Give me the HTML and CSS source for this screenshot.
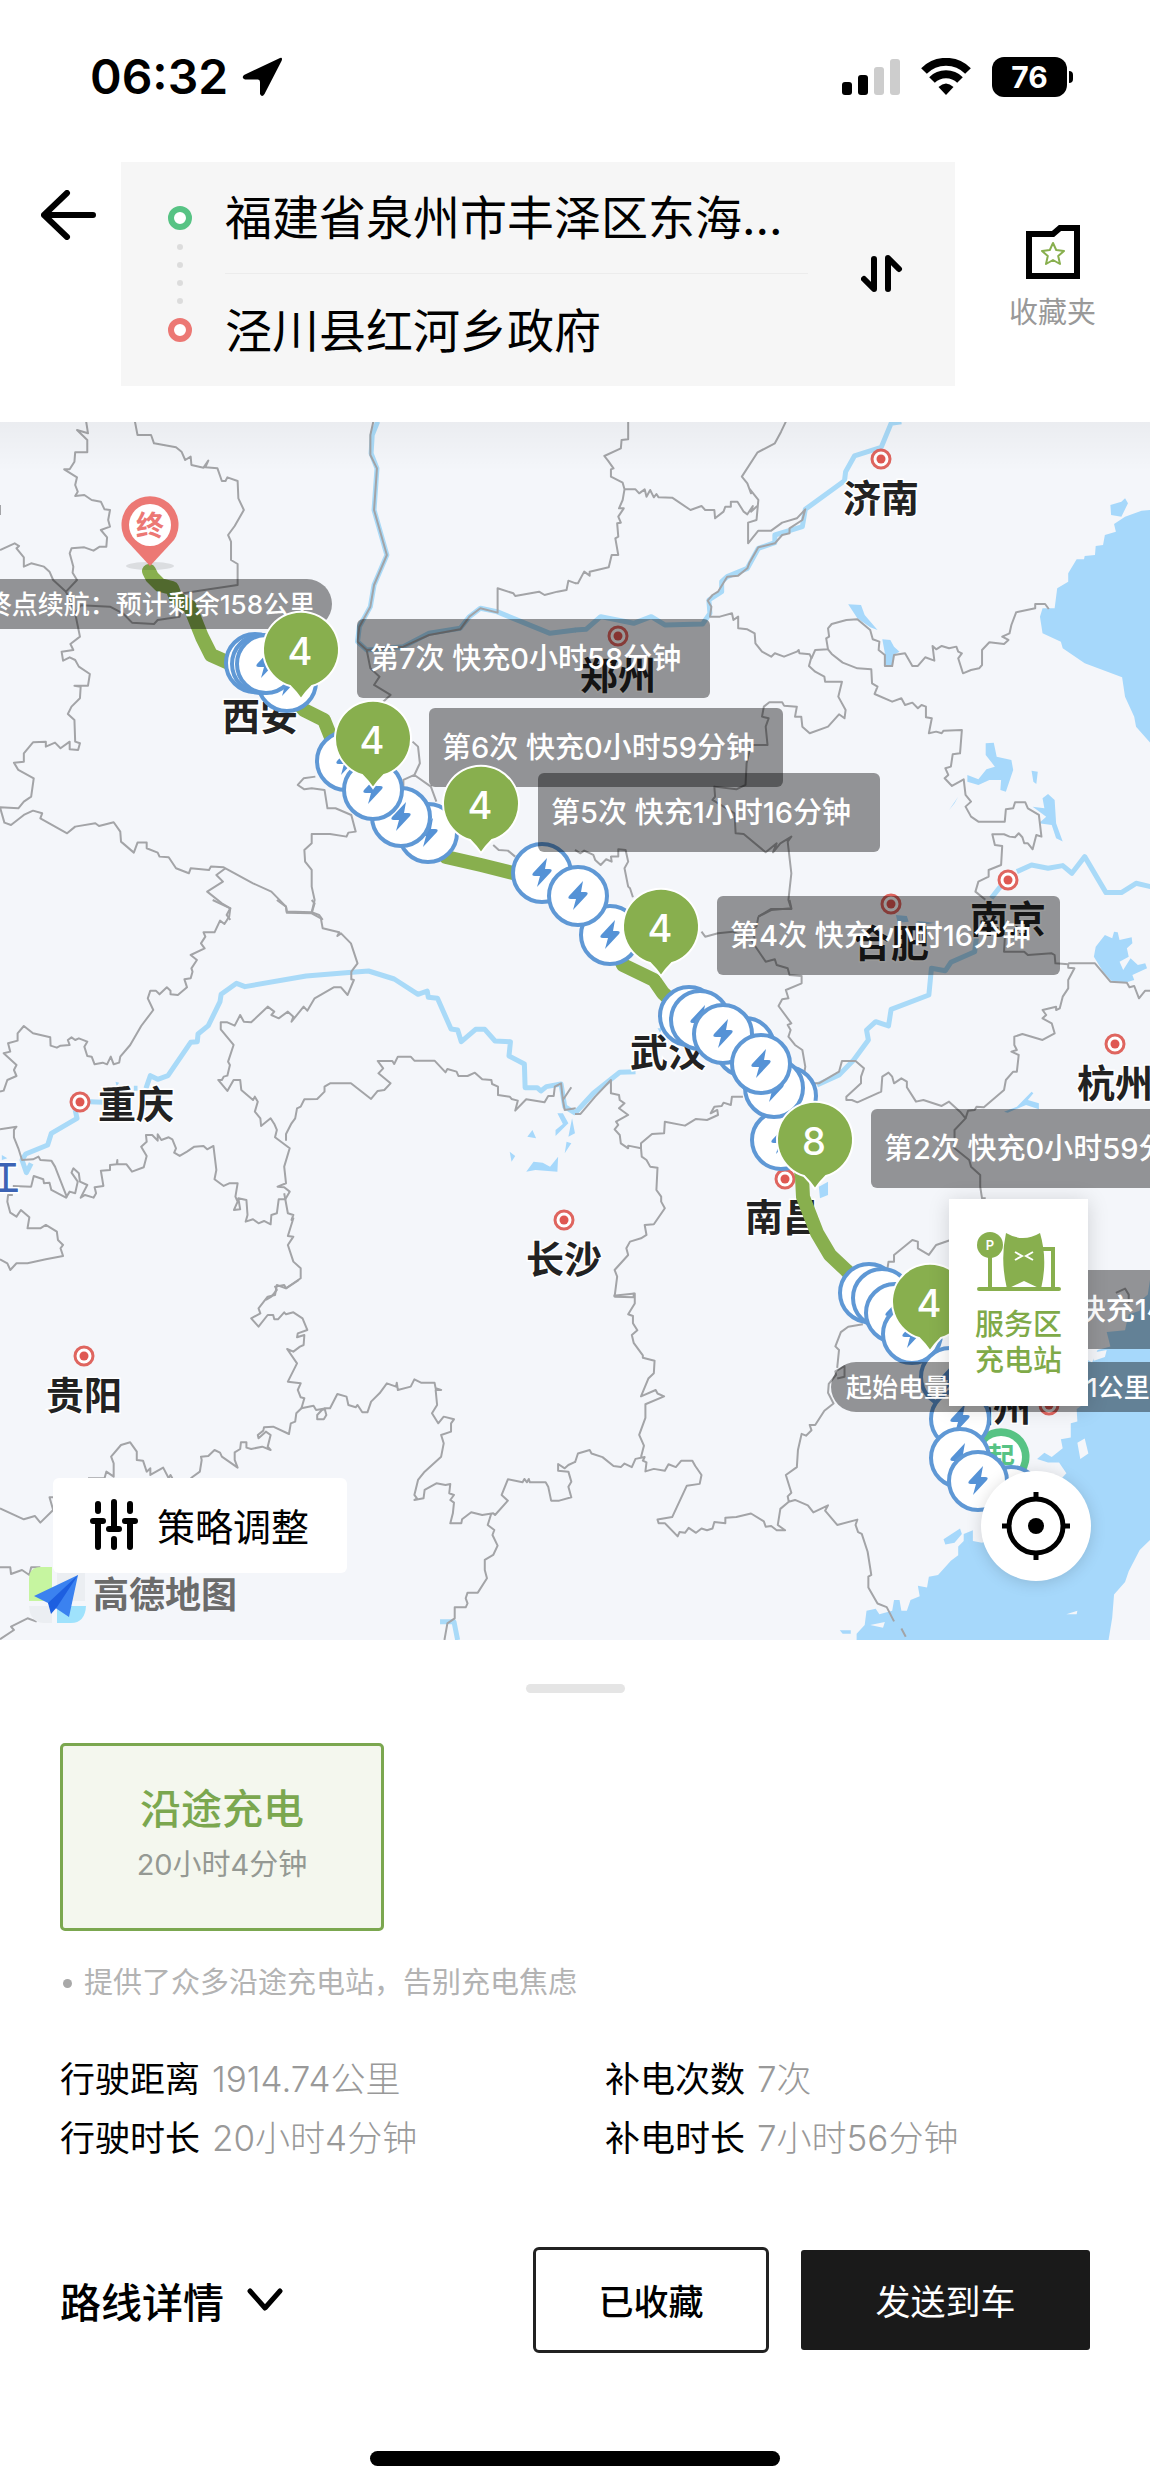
FILE: index.html
```html
<!DOCTYPE html>
<html lang="zh-CN">
<head>
  <meta charset="UTF-8" />
  <meta name="viewport" content="width=device-width, initial-scale=1" />
  <title>路线规划</title>
  <link rel="stylesheet" href="styles.css">
</head>
<body>

  <div class="status-bar">
    <div class="status-left">
      <span class="time">06:32</span>
      <svg width="40" height="40" viewBox="0 0 40 40"><path d="M38 1 L2 18 Q-1 21 3 22.500 H16 Q18 22.500 18 25 V37 Q20 41 22.500 37 L39.500 4 Q41 0 38 1Z" /></svg>
    </div>
    <div class="status-right">
      <svg width="58" height="38" viewBox="0 0 58 38">
        <rect x="0" y="24" width="10" height="13" rx="3" />
        <rect x="16" y="17" width="10" height="20" rx="3" />
        <rect class="bar-off" x="32" y="9" width="10" height="28" rx="3" />
        <rect class="bar-off" x="48" y="1" width="10" height="36" rx="3" />
      </svg>
      <svg width="50" height="38" viewBox="0 0 50 38">
        <path class="wifi-arc" d="M3 13 A31 31 0 0 1 47 13" />
        <path class="wifi-arc" d="M11 22 A20 20 0 0 1 39 22" />
        <path d="M25 37 L17.500 29 Q25 22 32.500 29Z" />
      </svg>
      <div class="battery">76</div>
    </div>
  </div>

  <header class="header">
    <button class="back" type="button" aria-label="返回">
      <svg width="56" height="50" viewBox="0 0 56 50"><path d="M52 25 H3 M26 3 L3 25 L26 47" /></svg>
    </button>
    <div class="route-box">
      <svg class="route-marks" width="24" height="136" viewBox="0 0 24 136">
        <circle class="from" cx="12" cy="12" r="9" />
        <circle class="mid" cx="12" cy="41" r="3" />
        <circle class="mid" cx="12" cy="59" r="3" />
        <circle class="mid" cx="12" cy="77" r="3" />
        <circle class="mid" cx="12" cy="95" r="3" />
        <circle class="to" cx="12" cy="124" r="9" />
      </svg>
      <div class="route-fields">
        <input type="text" aria-label="起点" value="福建省泉州市丰泽区东海..." readonly />
        <input type="text" aria-label="终点" value="泾川县红河乡政府" readonly />
      </div>
      <button class="swap" type="button" aria-label="交换起终点">
        <svg width="42" height="40" viewBox="0 0 42 40"><path d="M13 5 V35 L3 25 M27 35 V4 L38 15" /></svg>
      </button>
    </div>
    <a class="favorites" href="#">
      <svg width="54" height="54" viewBox="0 0 54 54">
        <path class="folder" d="M3 9 H27 L34 3 H51 V51 H3Z" />
        <path class="star" d="M27 18 L30.200 25 L38 26 L32.200 31 L34 39 L27 35 L20 39 L21.800 31 L16 26 L23.800 25Z" />
      </svg>
      <span>收藏夹</span>
    </a>
  </header>

  <main class="map">
    <svg class="map-canvas" viewBox="0 0 1150 1218" preserveAspectRatio="xMinYMin slice">
      <defs>
        <g id="city"><circle class="city-ring" r="9" /><circle class="city-core" r="4.500" /></g>
        <g id="charger">
          <circle r="29" />
          <path d="M5 -15 L-9 0 Q-11 3 -7 3 H-2 L-5 14 L9 -1 Q11 -4 7 -4 H3Z" />
        </g>
        <path id="bubble" d="M-11 36 A38 38 0 1 1 11 36 Q5 42 0 49 Q-5 42 -11 36Z" />
      </defs>

      <!-- north west -->
      <g transform="translate(0 -2) scale(.3667 .3333)">
        <path class="river" d="M1030 5 1015 45 1012 100 1028 145 1020 270 1055 405 1020 495 1010 560 980 620 975 665 1000 690 1100 680 1170 640 1255 625 1280 590 1310 565 1355 575 1500 640 1570 630" />
        <path class="border" d="M235 5 240 40 210 30 238 60 238 97 205 97 203 125 190 148 175 148 210 172 205 195 212 215 205 228 230 225 250 240 275 245 285 268 300 270 295 300 300 320 275 330 292 352 290 380 272 380 255 392 230 382 195 385 190 400 200 440 198 458 210 480 180 515 145 480 135 455 120 440 85 430 65 440 65 412 45 385 52 378 40 370 0 390M0 255 V285" />
        <path class="border" d="M368 5 375 45 412 45 420 70 480 82 495 95 505 120 520 110 522 135 555 143 568 122 560 142 593 145 605 183 615 183 620 172 648 183 650 235 665 270 640 318 622 345 630 365 630 420 648 432 648 495 570 508 500 520 490 590 430 600 420 612 360 608 335 580 300 560 220 556 205 580 218 650 192 672 200 690 168 695 172 722 190 712 205 720 215 740 245 762 240 797 203 797 220 800 218 835 195 860 185 882 203 900 205 965 218 970 213 990 190 988 190 965 165 985 150 968 125 980 125 965 90 967 65 1000 65 1025 38 1028 50 1050 92 1075 85 1130 65 1145 50 1165 0 1162 12 1208 30 1215 65 1185 90 1172 115 1180 110 1195 183 1240 205 1220 260 1210 270 1218 310 1207 328 1235 330 1265 365 1298 375 1268 400 1268 400 1285 430 1298 435 1310 460 1312 480 1345 515 1360 520 1345 570 1350 575 1340 610 1342 690 1390 740 1415 780 1460 782 1475 850 1477 858 1440 850 1400 850 1350 832 1325 830 1290 850 1270 850 1242 900 1242 945 1250 950 1238 970 1235 958 1185 915 1165 893 1165 885 1110 850 1105 830 1108 812 1095 828 1075 860 1070" />
        <path class="border" d="M180 515 205 580M615 1345 590 1365 608 1385 565 1415 605 1450 628 1465 618 1485 628 1500M850 1477 870 1485 880 1500" />
        <path class="border" d="M1018 5 1010 45 1010 105 1028 145 1020 270 1055 405 1020 495 1010 560 980 620 975 665 1000 690 1100 680 1170 645 1255 628 1280 590 1310 565 1357 578 1357 505 1400 520 1405 528 1470 515 1485 525 1520 515 1545 510 1550 482 1570 490M1000 690 1010 745 1035 770 1020 795 1065 825 1045 845M1125 965 1140 980 1145 1030 1130 1065 1100 1080V1110M1130 1065 1175 1100 1190 1145M1345 1275 1360 1290 1385 1292 1405 1310" />
      </g>

      <!-- north east -->
      <g transform="translate(575 -2) scale(.3667 .3333)">
        <path class="water" d="M1570 270 1545 272 1500 290 1470 312 1475 335 1445 345 1440 375 1420 378 1418 405 1390 408 1388 418 1368 418 1345 460 1345 485 1315 505 1308 565 1275 565 1268 590 1275 640 1325 665 1330 685 1390 730 1492 772 1500 830 1525 890 1530 920 1570 970ZM1460 255 1490 245 1500 235 1508 250 1490 290 1462 285Z" />
        <path class="water" d="M745 553 780 555 790 585 825 630 805 622 770 595ZM838 658 860 660 870 680 885 695 868 705 865 735 845 735 845 700ZM1120 970 1142 968 1150 1010 1190 1020 1195 1050 1175 1115 1160 1110 1162 1080 1130 1080 1100 1095 1070 1085 1070 1065 1100 1078 1122 1048 1145 1040 1120 1005ZM1245 1052 1262 1055 1258 1092 1250 1085ZM1248 1160 1280 1165 1275 1135 1290 1122 1308 1140 1312 1210 1330 1265 1312 1255 1300 1215 1265 1210 1285 1190ZM1045 1130 1020 1170 1035 1150Z" />
        <path class="river" d="M890 5 862 10 835 82 762 108 738 155 735 182 628 268 620 320 545 345 545 368 500 385 470 445 415 470 400 485 400 515 365 540 368 580 348 612 245 615 208 590 160 610 70 590 30 628 0 630" />
        <path class="river" d="M1135 1435 1160 1400M1205 1355 1245 1335 1290 1345 1330 1337 1355 1360 1390 1310 1448 1418 1490 1418 1530 1390 1570 1400" />
        <path class="border" d="M145 5 145 58 127 60 125 85 80 108 90 122 105 145 98 148 98 170 130 188 135 208 130 240 120 265 133 265 118 290 125 308 115 310 118 350 110 355 118 405 100 405 92 442 40 455 40 467 25 455 8 490 0 490M135 208 165 208 175 220 190 208 195 230 205 210 215 232 222 222 228 232 265 233 315 270 345 258 355 270 380 270 382 295 405 275 410 260 425 260 425 245 443 245 460 275 470 283 485 258 480 275 497 258" />
        <path class="border" d="M575 5 562 35 545 70 498 97 455 170 470 190 480 220 475 205 500 240 495 300 472 308 472 370 500 332 535 332 565 308 605 295 628 268 620 300 585 325 585 340 565 345 545 370 500 382 475 430 470 445 445 467 415 470 390 515 375 525 362 542 372 560 368 590 395 590 428 580 432 600 445 590 445 625 470 628 490 640 492 670 510 695 535 710 545 700 570 710 605 695 610 690 612 700 640 703 645 715 655 690 690 688 685 655 693 650 690 625 700 612 740 600 770 598 805 630 812 658 830 665 828 690 845 705 845 738 865 738 870 705 900 700 920 738 935 738 955 712 980 722 975 678 985 688 1000 678 1020 685 1040 680 1045 695 1055 700 1045 715 1058 760 1080 750 1102 745 1110 735 1110 690 1130 667 1170 672 1182 660 1165 650 1185 640 1190 615 1203 577 1255 565 1255 552 1282 552 1292 567" />
        <path class="border" d="M690 688 700 702 730 728 770 745 808 748 810 790 825 800 817 822 865 845 890 835 900 855 920 848 935 865 945 855 957 860 957 892 973 895 965 940 985 935 1000 940 1005 932 1055 930 1050 1000 1030 1003 1025 1040 1010 1045 1018 1065 1008 1075 1028 1098 1060 1078 1065 1125 1080 1145 1065 1160 1080 1190 1100 1205 1172 1205 1175 1168 1195 1165 1200 1147 1228 1147 1235 1165 1265 1185 1272 1250 1258 1245 1248 1288 1235 1270 1225 1270 1220 1252 1210 1240 1200 1252 1185 1250 1170 1243 1138 1243 1145 1275 1165 1278 1162 1335 1128 1350 1128 1370 1100 1385 1092 1415 1120 1440" />
        <path class="border" d="M645 710 638 738 655 755 680 770 682 785 728 785 718 830 738 870 735 895 720 883 690 920 640 940 620 920 617 890 600 890 605 860 570 857 565 847 530 847 515 860 510 890 528 895 520 920 525 975 480 975 468 1030 465 1095 440 1108 380 1100 382 1130 375 1140 405 1160 435 1180 438 1240 460 1242 520 1297 550 1270 540 1297 560 1270 590 1250 580 1265 590 1360 582 1440 590 1467 535 1467 500 1490M0 1290 15 1300 25 1292 50 1305 55 1320 70 1335 85 1318 100 1325 98 1310 118 1310 118 1288 138 1290 145 1325 135 1345 145 1400 150 1405 158 1432" />
      </g>

      <!-- west -->
      <g transform="translate(0 478) scale(.3667 .3333)">
        <path class="water" d="M1520 640 1535 640 1550 670 1515 708 1515 690 1535 672ZM1452 690 1462 715 1438 710ZM1390 755 1405 768 1395 785ZM1455 785 1480 788 1500 800 1522 770 1520 815 1460 810 1435 815ZM1560 655 1550 710 1568 700ZM1545 725 1558 730 1540 760ZM315 545 325 548 318 558ZM5 765 20 775 5 780Z" />
        <path class="river" d="M85 790 72 818 60 780 70 762 130 735 140 700 210 655 205 630M245 605 280 607M365 565 375 565M398 565 410 527 430 538 458 527 520 427 538 425 540 402 568 377 600 305 603 283 645 250 668 260 835 228 960 217 1005 213 1075 237 1140 283 1165 273 1168 292 1193 295 1230 387 1248 390 1258 425 1297 388 1322 388 1350 423 1392 425 1388 468 1430 492 1432 563 1465 563 1475 573 1490 560 1530 552 1540 620 1570 640" />
        <path class="border" d="M580 0 628 25 625 50 612 72 600 62 585 97 555 97 560 110 548 130 558 145 520 165 537 180 522 205 525 215 520 235 503 238 510 262 485 285 465 283 465 272 455 262 435 283 425 272 410 272 403 295 418 330 385 378 355 435 328 470 325 488 310 493 302 470 292 493 280 488 258 493 250 470 238 468 230 440 238 425 215 415 205 420 195 412 185 420 190 435 165 437 155 443 138 437 137 412 90 400 65 378 48 400 48 422 22 430 28 455 10 460 45 495 38 510 45 528 20 540 10 572 0 575" />
        <path class="border" d="M755 0 780 20 782 38 850 40 858 10 850 0M850 40 875 55 880 85 925 97 920 108 930 100 957 130 975 190 958 215 958 238 965 240 948 285 930 262 910 262 858 295 838 332 828 320 795 365 800 350 785 335 760 355 740 345 748 335 730 320 685 367 665 365 655 345 640 377 620 367 602 367 602 388 637 435 622 485 627 495 620 527 610 530 605 540 595 540 620 573 637 540 655 540 658 570 690 600 695 590 703 605 695 635 710 655 712 678 738 655 748 672 755 690 750 712 790 745 775 800 780 850 757 860 775 862 790 875 778 898 760 898 755 940 740 945 738 973 720 963 705 970 690 958 670 965 675 945 672 900 650 895 655 928 638 930 648 905 642 890 648 850 625 850 610 858 585 838 590 810 582 738 565 748 555 738 530 740 510 755 490 768 475 758 480 745 470 718 460 712 440 720 430 703 430 722 415 705 398 705 400 725 385 740 400 768 392 802 360 815 345 793 320 793 320 780 318 793 300 795 300 810 275 812 282 858 258 862 262 880 255 893 232 885 220 893 238 855 218 845 215 820 200 805 195 818 212 845 205 880 190 875 180 893 140 870 135 848 120 850 118 838 92 828 85 860 35 858M0 688 45 680 38 690 38 712 50 745 60 780 90 778 105 770 110 780 140 782 150 800 183 893" />
        <path class="border" d="M35 885 22 885 20 905 28 938 45 950 57 930 80 952 75 985 110 985 125 975 155 995 158 1020 172 1035 165 1045 172 1068 125 1078 75 1090 45 1090 28 1110 20 1090 0 1078M780 722 780 702 795 670 805 655 810 625 820 620 830 598 865 597 885 575 885 560 900 550 957 550 1012 597 1030 573 1048 570 1065 550 1032 520 1045 505 1030 483 1070 483 1075 492 1085 470 1120 470 1130 482 1185 482 1215 517 1220 507 1245 515 1250 528 1275 528 1295 518 1315 538 1340 540 1342 552 1358 560 1358 585 1390 590 1395 597 1412 602 1405 632 1435 598 1485 607 1495 588 1510 588 1513 560 1530 550 1535 600 1558 562M1535 600 1540 630 1570 625M775 880 785 940 800 945 795 960 800 955 785 1008 800 1010 785 1035 800 1085 820 1105 820 1135 780 1165 775 1155 750 1160 755 1170 740 1190 725 1200" />
      </g>

      <!-- east -->
      <g transform="translate(575 478) scale(.3667 .3333)">
        <path class="water" d="M1420 140 1445 105 1465 115 1470 95 1480 97 1485 120 1518 112 1520 130 1505 145 1510 170 1485 185 1495 210 1515 175 1535 195 1555 190 1560 205 1520 225 1525 240 1500 248 1465 245 1440 215 1415 170ZM1170 635 1205 620 1245 575 1250 580 1235 600 1265 610 1265 628 1230 615 1180 638ZM665 860 690 845 690 885 668 895ZM875 45 905 48 910 65 880 68ZM930 62 980 68 950 75ZM225 385 238 385 232 398Z" />
        <path class="river" d="M0 640 50 580 122 517 165 515M660 555 720 525 760 480 800 420 795 390 820 365 855 378 862 328 965 285 972 205 1010 212 1025 187 1090 155 1095 110" />
        <path class="border" d="M0 642 15 642 55 590 98 540 98 580 120 585 122 600 135 610 120 625 145 645 112 665 118 675 108 688 122 705 125 730 145 745 145 737 180 745 180 730 210 702 243 700 245 665 300 677 330 657 360 660 390 645 388 630 370 640 380 620 400 618 405 608 425 615 428 590 458 590M180 745 182 770 195 780 205 800 225 803 222 870 235 890 235 905 245 925 215 973 190 975 195 1005 180 1015 150 1025 140 1045 145 1065 108 1110 115 1130 108 1190 160 1192 160 1178" />
        <path class="border" d="M345 95 355 110 390 100 430 95 480 120 520 185 545 178 550 195 580 205 585 225 618 228 618 250 575 270 582 295 565 298 555 318 590 370 580 375 588 390 582 410 600 435 620 450 628 500 625 520 650 550 665 550 720 515 728 483 765 483 788 505 780 530 780 550 740 590 740 600 755 600 770 607 835 575 838 530 855 518 865 530 870 550 890 535 905 545 905 562 930 605 950 600 1000 618 1020 605 1050 635 1065 655 1035 690 1035 745 1075 780 1080 800 1105 825 1105 860 1110 895 1120 895M500 50 535 30 590 25 585 0M500 50 495 80 485 85 490 120" />
        <path class="border" d="M1065 655 1072 632 1090 630 1095 620 1115 622 1170 570 1175 540 1195 515 1205 515 1210 465 1190 455 1205 450 1198 435 1198 410 1220 402 1275 420 1308 400 1300 370 1275 355 1285 345 1275 330 1312 320 1312 330 1322 325 1330 290 1345 265 1345 240 1362 205 1345 203 1345 193 1310 190 1308 165 1300 160 1235 165 1225 155 1170 155 1175 60M1345 190 1418 190 1460 245 1505 248 1512 262 1525 258 1538 295 1555 272 1570 272M850 1120 855 1085 870 1085 870 1065 920 1020 935 1025 935 1045 965 1065 985 1035 1030 1018" />
      </g>

      <!-- south west -->
      <g transform="translate(0 858) scale(.3667 .3333)">
        <path class="river" d="M1200 1025 1238 1025 1248 1080" />
        <path class="border" d="M815 0 780 25 755 15 750 45 730 50 705 85 710 100 685 115 705 140 730 105 745 105 748 118 758 118 775 97 780 103 800 97 825 115 838 150 812 160 810 172 830 165 828 195 818 200 800 215 783 207 810 250 785 305 820 310 812 330 820 352 830 355 822 385 855 377 862 390 890 385 878 390 865 405 865 418 883 418 890 405 885 385 900 385 920 342 945 350 950 375 970 382 975 375 988 397 1002 397 1012 365 1035 340 1055 310 1080 320 1082 308 1085 330 1120 320 1130 298 1148 308 1185 308 1188 325 1203 330 1188 330 1192 375 1178 400 1195 430 1210 410 1238 418 1230 430 1230 455 1203 465 1210 490 1203 530 1158 575 1140 600 1130 645 1137 655 1130 660 1155 655 1158 630 1190 610 1215 615 1228 612 1225 640 1238 645 1228 660 1238 668 1235 700 1228 730 1258 730 1260 718 1285 697 1315 705 1345 700 1350 705 1385 662 1368 645 1385 598 1425 607 1430 597 1437 607 1442 597 1445 607 1488 607 1495 620 1503 662 1525 662 1558 652 1550 620 1558 605 1550 575 1522 572 1522 552 1540 565 1550 555 1570 545" />
        <path class="border" d="M1340 700 1330 735 1348 750 1343 765 1357 797 1345 825 1322 840 1322 870 1328 895 1303 938 1275 938 1270 955 1275 970 1270 982 1240 982 1240 1015 1220 1030 1212 1080M822 385 808 400 805 425 793 430 788 462 745 440 720 442 718 452 703 465 705 475 725 455 738 465 730 500 738 510 715 500 685 507 672 503 672 487 657 487 655 507 640 517 640 540 648 563 605 530 600 518 585 510 568 528 548 530 550 540 545 575 520 595M470 595 465 585 460 595 445 563 410 585 410 565 400 575 390 542 373 540 373 515 355 487 330 495 303 530 310 550 310 590 290 575 285 595 240 595M145 652 135 652 145 690 110 728 95 708 65 718 0 685M0 862 28 862 30 882 60 870 80 885 85 862 110 862M0 1078 38 1050 30 1040 75 1015 100 1025" />
      </g>

      <!-- south east -->
      <g transform="translate(575 678) scale(.3667 .3571)">
        <path class="water" d="M1570 490 1562 545 1545 560 1540 590 1510 600 1505 620 1500 645 1450 650 1460 690 1425 700 1410 735 1385 720 1390 850 1368 865 1370 900 1352 905 1352 945 1325 950 1330 975 1300 1000 1280 988 1260 1005 1290 1015 1320 1015 1340 1045 1200 1200 1110 1240 1085 1235 1085 1205 1060 1215 1060 1235 1045 1250 1045 1275 1025 1290 990 1330 965 1335 960 1365 935 1360 940 1390 915 1400 905 1430 890 1430 885 1400 870 1400 865 1430 830 1440 820 1425 795 1430 790 1470 768 1495 768 1512 1455 1512 1465 1450 1470 1385 1500 1350 1510 1320 1540 1260 1570 1230ZM1005 1230 1050 1200 1055 1215 1035 1240 1010 1245ZM722 1485 752 1485 752 1495 730 1495Z" />
        <path class="land" d="M1370 960 1390 948 1400 990 1378 1005ZM1340 1440 1370 1430 1368 1440ZM805 1470 845 1462 840 1478ZM1410 708 1450 700 1445 720 1415 730Z" />
        <path class="border" d="M105 548 163 542 163 570 145 600 158 605 158 625 170 645 155 658 160 680 185 715 185 722 217 730 215 765 200 780 180 830 220 812 225 822 243 830 192 852 192 890 175 938 188 968 180 1000M0 1015 8 990 40 980 45 990 75 1000 105 1025 125 1028 135 1018 155 1028 165 1005 190 1000 185 1010 195 1015 192 1040 215 1033 245 1038 255 1020 275 1028 290 1010 320 1010 328 1025 345 1050 340 1075 305 1080 265 1168 225 1175 228 1185 245 1185 280 1222 285 1210 300 1212 310 1198 330 1212 345 1200 360 1205 375 1200 380 1182 410 1185 410 1170 440 1168 480 1158 515 1180 520 1195 535 1193 550 1205 573 1205 553 1190 560 1145 583 1125 580 1110 590 1100 575 1050 605 1028 608 980 618 935 630 940 645 925 640 910 655 910 680 870 705 850 690 820 692 795 712 770 710 760 735 745 735 775 715 780M715 750 720 700 710 690 725 650 745 635 785 628M583 1125 600 1120 635 1135 650 1155 690 1135 682 1150 715 1190 770 1175 765 1190 772 1210 782 1215 798 1265 808 1330 800 1335 800 1365 825 1410 850 1420 870 1460M890 1480 902 1503M1475 540 1500 528 1510 545 1510 570" />
      </g>

      <!-- cities -->
      <g class="cities">
        <use href="#city" x="881" y="37" /><text x="881" y="90">济南</text>
        <use href="#city" x="618" y="214" /><text x="618" y="267">郑州</text>
        <use href="#city" x="1008" y="458" /><text x="1008" y="511">南京</text>
        <use href="#city" x="891" y="482" /><text x="891" y="535">合肥</text>
        <text x="260" y="308">西安</text>
        <use href="#city" x="669" y="591" /><text x="668" y="644">武汉</text>
        <use href="#city" x="785" y="757" /><text x="783" y="809">南昌</text>
        <use href="#city" x="1115" y="622" /><text x="1115" y="675">杭州</text>
        <use href="#city" x="564" y="798" /><text x="564" y="851">长沙</text>
        <use href="#city" x="84" y="934" /><text x="84" y="987">贵阳</text>
        <use href="#city" x="80" y="680" /><text x="136" y="696">重庆</text>
        <use href="#city" x="1049" y="983" /><text x="993" y="999">福州</text>
        <text class="river-name" x="1" y="769">江</text>
      </g>

      <path class="route" d="M149 149 152 155 160 163 172 166 176 176 190 185 196 200 202 215 211 233 229 241 265 242 304 288 324 298 332 318 345 340 372 368 401 395 428 411 446 435 481 443 513 451 542 451 578 474 610 513 623 543 654 558 663 571 689 595 723 612 761 642 787 674 795 715 802 755 803 775 817 811 830 833 846 848 869 871 912 912 950 955 960 998 960 1036 1011 1074" />

      <!-- end and start pins -->
      <ellipse class="pin-shadow" cx="150" cy="144" rx="24" ry="4" />
      <path class="pin-end" d="M150 144 L126 118 A28.500 28.500 0 1 1 174 118Z" />
      <circle class="pin-hole" cx="150" cy="103" r="21" />
      <text class="pin-text pin-text-end" x="150" y="114">终</text>
      <path class="pin-start" d="M1001 1076 L977 1050 A28.500 28.500 0 1 1 1025 1050Z" />
      <circle class="pin-hole" cx="1001" cy="1035" r="21" />
      <text class="pin-text pin-text-start" x="1001" y="1046">起</text>

      <g class="chargers">
        <use href="#charger" x="287" y="260" />
        <use href="#charger" x="255" y="241" />
        <use href="#charger" x="261" y="242" />
        <use href="#charger" x="266" y="242" />
        <use href="#charger" x="428" y="411" />
        <use href="#charger" x="401" y="395" />
        <use href="#charger" x="346" y="339" />
        <use href="#charger" x="373" y="368" />
        <use href="#charger" x="542" y="451" />
        <use href="#charger" x="610" y="513" />
        <use href="#charger" x="578" y="474" />
        <use href="#charger" x="689" y="594" />
        <use href="#charger" x="700" y="598" />
        <use href="#charger" x="745" y="625" />
        <use href="#charger" x="723" y="612" />
        <use href="#charger" x="787" y="674" />
        <use href="#charger" x="781" y="718" />
        <use href="#charger" x="774" y="666" />
        <use href="#charger" x="761" y="642" />
        <use href="#charger" x="869" y="871" />
        <use href="#charger" x="882" y="876" />
        <use href="#charger" x="895" y="891" />
        <use href="#charger" x="912" y="912" />
        <use href="#charger" x="950" y="955" />
        <use href="#charger" x="960" y="997" />
        <use href="#charger" x="960" y="1036" />
        <use href="#charger" x="1011" y="1074" />
        <use href="#charger" x="978" y="1059" />
      </g>

      <!-- charging stops -->
      <g class="tips">
        <rect x="357" y="197" width="353" height="79" rx="6" /><text x="370" y="247">第7次 快充0小时58分钟</text>
        <rect x="429" y="286" width="354" height="79" rx="6" /><text x="442" y="336">第6次 快充0小时59分钟</text>
        <rect x="538" y="351" width="342" height="79" rx="6" /><text x="551" y="401">第5次 快充1小时16分钟</text>
        <rect x="717" y="474" width="343" height="79" rx="6" /><text x="730" y="524">第4次 快充1小时16分钟</text>
        <rect x="871" y="687" width="354" height="79" rx="6" /><text x="884" y="737">第2次 快充0小时59分钟</text>
        <rect x="986" y="848" width="354" height="79" rx="6" /><text x="999" y="898">第1次 快充1小时16分钟</text>
      </g>
      <g class="range">
        <rect x="-40" y="157" width="372" height="50" rx="25" /><text class="range-end" x="315" y="192">终点续航：预计剩余158公里</text>
        <rect x="831" y="940" width="400" height="50" rx="25" /><text x="846" y="975">起始电量：可续航501公里</text>
      </g>
      <g class="bubbles">
        <use href="#bubble" x="301" y="228" /><text x="300" y="243">4</text>
        <use href="#bubble" x="373" y="317" /><text x="372" y="332">4</text>
        <use href="#bubble" x="481" y="382" /><text x="480" y="397">4</text>
        <use href="#bubble" x="661" y="505" /><text x="660" y="520">4</text>
        <use href="#bubble" x="815" y="718" /><text x="814" y="733">8</text>
        <use href="#bubble" x="930" y="880" /><text x="929" y="895">4</text>
      </g>
    </svg>

    <div class="amap">
      <svg width="58" height="56" viewBox="0 0 58 56">
        <path fill="#c6f5a0" d="M12 0 H23 V34 H0 V12 Q0 0 12 0Z" />
        <path fill="#9fe2fc" d="M28 39 H57 Q56 56 42 56 H28Z" />
        <path fill="#ebeef2" d="M0 39 H23 V56 H14 Q1 55 0 39ZM28 5 H56 V34 H28Z" />
        <path fill="#3b82f0" d="M49 8 L5 29 L19 36 L40 50Z" />
        <path fill="#1d5fe0" d="M49 8 L19 36 L22 47 L28 40Z" />
      </svg>
      <span>高德地图</span>
    </div>

    <button class="strategy" type="button">
      <svg width="50" height="52" viewBox="0 0 50 52"><path d="M9 5 V12 M4 22 H14 M9 22 V48 M25 3 V29 M20 30 H30 M25 40 V48 M41 5 V12 M36 22 H46 M41 22 V48" /></svg>
      策略调整
    </button>

    <button class="service" type="button">
      <svg width="84" height="60" viewBox="0 0 84 60">
        <circle cx="13" cy="13" r="13" />
        <path class="service-line" d="M13 24 V56 M2 57 H82 M64 17 H76 V57" />
        <path d="M29 1 Q46 11 63 1 Q71 28 64 57 L47 49 L30 57 Q23 28 29 1Z" />
        <path class="service-face" d="M38 20 L45 24 L38 28 M56 20 L49 24 L56 28" />
        <text x="13" y="18">P</text>
      </svg>
      <span>服务区</span>
      <span>充电站</span>
    </button>

    <button class="locate" type="button" aria-label="定位">
      <svg width="70" height="70" viewBox="0 0 70 70">
        <circle class="locate-ring" cx="35" cy="35" r="27" />
        <path class="locate-ring" d="M35 1 V9 M35 61 V69 M1 35 H9 M61 35 H69" />
        <circle cx="35" cy="35" r="8" />
      </svg>
    </button>
  </main>

  <section class="sheet">
    <div class="handle"></div>
    <button class="plan" type="button">
      <strong>沿途充电</strong>
      <span>20小时4分钟</span>
    </button>
    <p class="note">提供了众多沿途充电站，告别充电焦虑</p>
    <dl class="stats">
      <div><dt>行驶距离</dt><dd>1914.74公里</dd></div>
      <div><dt>补电次数</dt><dd>7次</dd></div>
      <div><dt>行驶时长</dt><dd>20小时4分钟</dd></div>
      <div><dt>补电时长</dt><dd>7小时56分钟</dd></div>
    </dl>
    <div class="actions">
      <button class="details" type="button">
        路线详情
        <svg width="36" height="24" viewBox="0 0 36 24"><path d="M3 3 L18 20 L33 3" /></svg>
      </button>
      <button class="button saved" type="button">已收藏</button>
      <button class="button send" type="button">发送到车</button>
    </div>
    <div class="home-indicator"></div>
  </section>

</body>
</html>
```

FILE: styles.css
```css
* {
  box-sizing: border-box;
}
body {
  margin: 0;
  font-family: Inter, "Noto Sans CJK SC", sans-serif;
  background-color: #fff;
  color: #000;
}
button {
  font-family: inherit;
  color: inherit;
  background: none;
  border: none;
  padding: 0;
  cursor: pointer;
}
svg {
  display: block;
  flex: none;
}

/* status bar */
.status-bar {
  display: flex;
  justify-content: space-between;
  align-items: center;
  padding: 53px 77px 61px 90px;
}
.status-left {
  display: flex;
  align-items: center;
  gap: 14px;
}
.time {
  font-size: 48px;
  line-height: 48px;
  font-weight: 600;
}
.status-right {
  display: flex;
  align-items: center;
  gap: 21px;
}
.bar-off {
  fill: #cdcdcd;
}
.wifi-arc {
  fill: none;
  stroke: #000;
  stroke-width: 8px;
}
.battery {
  position: relative;
  width: 75px;
  height: 40px;
  margin-right: 6px;
  border-radius: 12px;
  background-color: #000;
  color: #fff;
  font-size: 30px;
  line-height: 40px;
  font-weight: 700;
  text-align: center;
}
.battery::after {
  content: "";
  position: absolute;
  top: 14px;
  right: -6px;
  width: 4px;
  height: 12px;
  border-radius: 0 4px 4px 0;
  background-color: #000;
}

/* route header */
.header {
  display: flex;
  padding: 0 0 36px 41px;
}
.back {
  align-self: flex-start;
  margin: 28px 24px 0 0;
}
.back path,
.swap path {
  fill: none;
  stroke: #000;
  stroke-width: 6px;
  stroke-linejoin: round;
  stroke-linecap: round;
}
.route-box {
  flex: 1;
  min-width: 0;
  display: flex;
  align-items: center;
  padding-left: 47px;
  background-color: #f6f6f6;
}
.route-marks {
  margin-right: 21px;
}
.from, .to {
  fill: #fff;
  stroke: #57c384;
  stroke-width: 6px;
}
.to {
  stroke: #ec7874;
}
.mid {
  fill: #dcdcdc;
}
.route-fields {
  flex: 1;
  min-width: 0;
  margin-left: 12px;
}
.route-fields input {
  display: block;
  width: 100%;
  height: 112px;
  padding: 0 0 6px;
  border: none;
  border-radius: 0;
  background: none;
  color: #000;
  font-family: inherit;
  font-size: 47px;
  outline: none;
}
.route-fields input:first-child {
  border-bottom: 1px solid #ececec;
}
.swap {
  display: flex;
  justify-content: center;
  width: 147px;
}
.favorites {
  display: flex;
  flex-direction: column;
  align-items: center;
  gap: 13px;
  width: 195px;
  padding-top: 63px;
  color: #999;
  font-size: 29px;
  line-height: 42px;
  text-decoration: none;
}
.folder {
  fill: none;
  stroke: #000;
  stroke-width: 6px;
}
.star {
  fill: none;
  stroke: #88af4e;
  stroke-width: 2px;
  stroke-linejoin: round;
}

/* map */
.map {
  position: relative;
  height: 1218px;
  overflow: hidden;
  background-color: #f4f6fa;
}
.map::before {
  content: "";
  position: absolute;
  inset: 0 0 auto;
  height: 50px;
  background: linear-gradient(rgba(0, 0, 0, 0.04), rgba(0, 0, 0, 0));
}
.map-canvas {
  width: 100%;
  height: 100%;
}
.border, .river {
  fill: none;
  stroke: #a3a4a7;
  stroke-width: 2px;
  stroke-linejoin: round;
  vector-effect: non-scaling-stroke;
}
.river {
  stroke: #a9daf8;
  stroke-width: 5px;
}
.water {
  fill: #a6d8fb;
}
.land {
  fill: #f4f6fa;
}
.city-ring {
  fill: #fff;
  stroke: #df655f;
  stroke-width: 3px;
}
.city-core {
  fill: #df5852;
}
.cities text {
  font-size: 38px;
  font-weight: 700;
  fill: #222;
  text-anchor: middle;
  stroke: #fff;
  stroke-width: 3px;
  paint-order: stroke;
}
.cities .river-name {
  font-size: 36px;
  font-weight: 500;
  fill: #3c63b4;
}
.route {
  fill: none;
  stroke: #88af4e;
  stroke-width: 14px;
  stroke-linejoin: round;
  stroke-linecap: round;
}
.pin-shadow {
  fill: rgba(0, 0, 0, 0.1);
}
.pin-end {
  fill: #ec7874;
}
.pin-start {
  fill: #57c384;
}
.pin-hole {
  fill: #fff;
}
.pin-text {
  font-size: 28px;
  font-weight: 700;
  text-anchor: middle;
}
.pin-text-end {
  fill: #ec7874;
}
.pin-text-start {
  fill: #57c384;
}
.chargers {
  fill: #fff;
  stroke: #5f98d5;
  stroke-width: 4px;
}
#charger path {
  fill: #5592d6;
  stroke: none;
}
.tips rect, .range rect {
  fill: rgba(0, 0, 0, 0.4);
}
.tips text, .range text {
  font-size: 29px;
  font-weight: 500;
  fill: #fff;
}
.range text {
  font-size: 26px;
}
.range .range-end {
  text-anchor: end;
}
.bubbles {
  fill: #88af4e;
  stroke: #fff;
  stroke-width: 2px;
}
.bubbles text {
  font-size: 38px;
  font-weight: 500;
  fill: #fff;
  stroke: none;
  text-anchor: middle;
}

/* controls over the map */
.amap {
  position: absolute;
  left: 29px;
  bottom: 17px;
  display: flex;
  align-items: center;
  gap: 6px;
  color: #6b6b6b;
  font-size: 36px;
  line-height: 56px;
  font-weight: 700;
}
.strategy {
  position: absolute;
  left: 53px;
  bottom: 67px;
  display: flex;
  align-items: center;
  gap: 18px;
  height: 95px;
  padding: 0 38px 2px 36px;
  border-radius: 6px;
  background-color: #fff;
  font-size: 38px;
}
.strategy path {
  fill: none;
  stroke: #000;
  stroke-width: 6px;
  stroke-linecap: round;
}
.service {
  position: absolute;
  right: 62px;
  bottom: 234px;
  display: flex;
  flex-direction: column;
  align-items: center;
  width: 139px;
  height: 207px;
  padding-top: 33px;
  background-color: #fff;
  box-shadow: 0 2px 20px rgba(0, 0, 0, 0.15);
  color: #80aa48;
  font-size: 29px;
  line-height: 36px;
  font-weight: 500;
}
.service svg {
  margin-bottom: 15px;
  fill: #88af4e;
}
.service-line {
  fill: none;
  stroke: #88af4e;
  stroke-width: 4px;
  stroke-linecap: round;
}
.service-face {
  fill: none;
  stroke: #fff;
  stroke-width: 2px;
}
.service text {
  fill: #fff;
  font-size: 13px;
  font-weight: 600;
  text-anchor: middle;
}
.locate {
  position: absolute;
  right: 59px;
  bottom: 59px;
  display: flex;
  align-items: center;
  justify-content: center;
  width: 110px;
  height: 110px;
  border-radius: 50%;
  background-color: #fff;
  box-shadow: 0 2px 16px rgba(0, 0, 0, 0.15);
}
.locate-ring {
  fill: none;
  stroke: #000;
  stroke-width: 5px;
}

/* bottom sheet */
.sheet {
  padding: 44px 60px 23px;
}
.handle {
  width: 99px;
  height: 9px;
  margin: 0 auto 50px;
  border-radius: 5px;
  background-color: #e5e5e5;
}
.plan {
  display: flex;
  flex-direction: column;
  align-items: center;
  width: 324px;
  height: 188px;
  padding-top: 33px;
  border: 3px solid #7ba74f;
  border-radius: 5px;
  background-color: #f4f7ee;
}
.plan strong {
  color: #7ba74f;
  font-size: 41px;
  line-height: 60px;
  font-weight: 500;
}
.plan span {
  color: #959993;
  font-size: 29px;
  line-height: 52px;
}
.note {
  display: flex;
  align-items: center;
  gap: 12px;
  margin: 31px 0 46px;
  padding-left: 3px;
  color: #b3b3b3;
  font-size: 29px;
  line-height: 42px;
}
.note::before {
  content: "";
  width: 9px;
  height: 9px;
  border-radius: 50%;
  background-color: #a8a8a8;
}
.stats {
  display: grid;
  grid-template-columns: 1fr 1fr;
  column-gap: 60px;
  margin: 0 0 79px;
  font-size: 35px;
  line-height: 59px;
}
.stats div {
  display: flex;
  gap: 12px;
}
.stats dd {
  margin: 0;
  color: #999;
  font-weight: 300;
}
.actions {
  display: flex;
  align-items: center;
  gap: 32px;
}
.details {
  display: flex;
  align-items: center;
  gap: 23px;
  margin-right: auto;
  font-size: 41px;
  font-weight: 500;
}
.details path {
  fill: none;
  stroke: #000;
  stroke-width: 5px;
  stroke-linecap: round;
  stroke-linejoin: round;
}
.button {
  width: 289px;
  height: 100px;
  padding-bottom: 2px;
  border-radius: 3px;
  font-size: 35px;
}
.saved {
  width: 236px;
  height: 106px;
  border: 3px solid #222;
  border-radius: 6px;
  font-weight: 500;
}
.send {
  background-color: #1a1a1a;
  color: #fff;
}
.home-indicator {
  width: 410px;
  height: 15px;
  margin: 98px auto 0;
  border-radius: 8px;
  background-color: #000;
}
```
